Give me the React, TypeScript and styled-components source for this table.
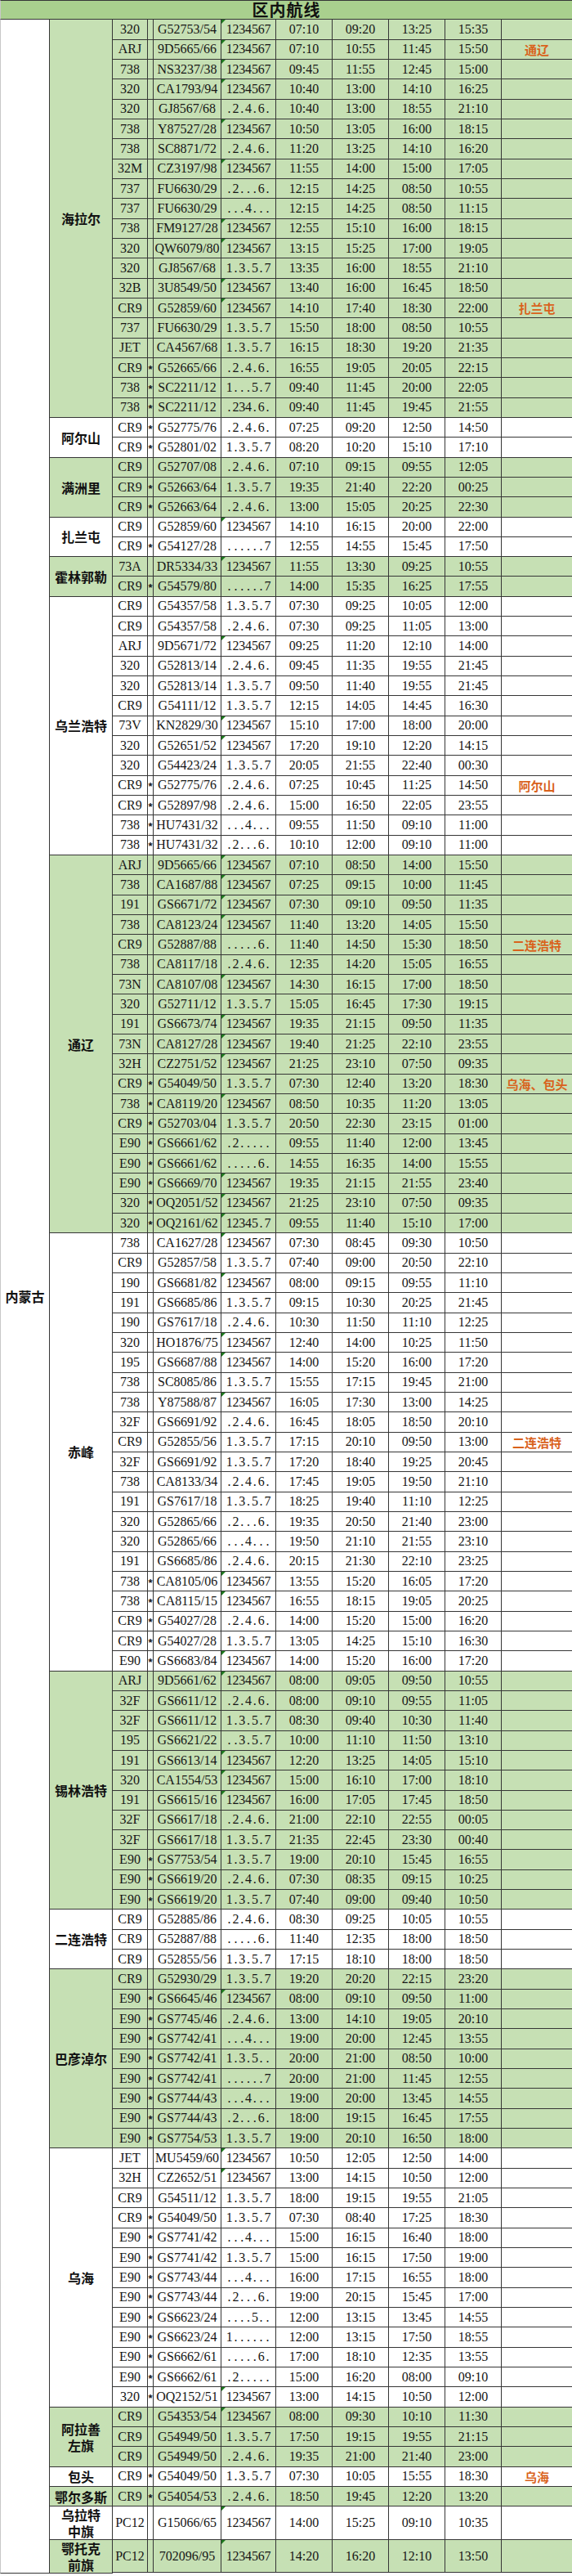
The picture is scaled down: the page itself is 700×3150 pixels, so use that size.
import React from 'react';
import styled, { createGlobalStyle } from 'styled-components';

const GREEN = '#c6e0b4';
const WHITE = '#ffffff';
const LINE = '#363636';

const GlobalStyle = createGlobalStyle`
  html, body {
    margin: 0;
    padding: 0;
    background: #fff;
  }
  body {
    font-family: "Liberation Serif", "Noto Sans CJK SC", serif;
    color: #161616;
  }
`;

interface Group {
  city: string;
  green: boolean;
  rowHeight?: number;
  rows: string[];
}

// type|star|flight|days|dep|arr|back dep|back arr|note
const groups: Group[] = [
  {
    city: '海拉尔',
    green: true,
    rows: [
      '320||G52753/54|1234567|07:10|09:20|13:25|15:35|',
      'ARJ||9D5665/66|1234567|07:10|10:55|11:45|15:50|通辽',
      '738||NS3237/38|1234567|09:45|11:55|12:45|15:00|',
      '320||CA1793/94|1234567|10:40|13:00|14:10|16:25|',
      '320||GJ8567/68|.2.4.6.|10:40|13:00|18:55|21:10|',
      '738||Y87527/28|1234567|10:50|13:05|16:00|18:15|',
      '738||SC8871/72|.2.4.6.|11:20|13:25|14:10|16:20|',
      '32M||CZ3197/98|1234567|11:55|14:00|15:00|17:05|',
      '737||FU6630/29|.2...6.|12:15|14:25|08:50|10:55|',
      '737||FU6630/29|...4...|12:15|14:25|08:50|11:15|',
      '738||FM9127/28|1234567|12:55|15:10|16:00|18:15|',
      '320||QW6079/80|1234567|13:15|15:25|17:00|19:05|',
      '320||GJ8567/68|1.3.5.7|13:35|16:00|18:55|21:10|',
      '32B||3U8549/50|1234567|13:40|16:00|16:45|18:50|',
      'CR9||G52859/60|1234567|14:10|17:40|18:30|22:00|扎兰屯',
      '737||FU6630/29|1.3.5.7|15:50|18:00|08:50|10:55|',
      'JET||CA4567/68|1.3.5.7|16:15|18:30|19:20|21:35|',
      'CR9|*|G52665/66|.2.4.6.|16:55|19:05|20:05|22:15|',
      '738|*|SC2211/12|1...5.7|09:40|11:45|20:00|22:05|',
      '738|*|SC2211/12|.234.6.|09:40|11:45|19:45|21:55|',
    ],
  },
  {
    city: '阿尔山',
    green: false,
    rows: [
      'CR9|*|G52775/76|.2.4.6.|07:25|09:20|12:50|14:50|',
      'CR9|*|G52801/02|1.3.5.7|08:20|10:20|15:10|17:10|',
    ],
  },
  {
    city: '满洲里',
    green: true,
    rows: [
      'CR9||G52707/08|.2.4.6.|07:10|09:15|09:55|12:05|',
      'CR9|*|G52663/64|1.3.5.7|19:35|21:40|22:20|00:25|',
      'CR9|*|G52663/64|.2.4.6.|13:00|15:05|20:25|22:30|',
    ],
  },
  {
    city: '扎兰屯',
    green: false,
    rows: [
      'CR9||G52859/60|1234567|14:10|16:15|20:00|22:00|',
      'CR9|*|G54127/28|......7|12:55|14:55|15:45|17:50|',
    ],
  },
  {
    city: '霍林郭勒',
    green: true,
    rows: [
      '73A||DR5334/33|1234567|11:55|13:30|09:25|10:55|',
      'CR9|*|G54579/80|......7|14:00|15:35|16:25|17:55|',
    ],
  },
  {
    city: '乌兰浩特',
    green: false,
    rows: [
      'CR9||G54357/58|1.3.5.7|07:30|09:25|10:05|12:00|',
      'CR9||G54357/58|.2.4.6.|07:30|09:25|11:05|13:00|',
      'ARJ||9D5671/72|1234567|09:25|11:20|12:10|14:00|',
      '320||G52813/14|.2.4.6.|09:45|11:35|19:55|21:45|',
      '320||G52813/14|1.3.5.7|09:50|11:40|19:55|21:45|',
      'CR9||G54111/12|1.3.5.7|12:15|14:05|14:45|16:30|',
      '73V||KN2829/30|1234567|15:10|17:00|18:00|20:00|',
      '320||G52651/52|1234567|17:20|19:10|12:20|14:15|',
      '320||G54423/24|1.3.5.7|20:05|21:55|22:40|00:30|',
      'CR9|*|G52775/76|.2.4.6.|07:25|10:45|11:25|14:50|阿尔山',
      'CR9|*|G52897/98|.2.4.6.|15:00|16:50|22:05|23:55|',
      '738|*|HU7431/32|...4...|09:55|11:50|09:10|11:00|',
      '738|*|HU7431/32|.2...6.|10:10|12:00|09:10|11:00|',
    ],
  },
  {
    city: '通辽',
    green: true,
    rows: [
      'ARJ||9D5665/66|1234567|07:10|08:50|14:00|15:50|',
      '738||CA1687/88|1234567|07:25|09:15|10:00|11:45|',
      '191||GS6671/72|1234567|07:30|09:10|09:50|11:35|',
      '738||CA8123/24|1234567|11:40|13:20|14:05|15:50|',
      'CR9||G52887/88|.....6.|11:40|14:50|15:30|18:50|二连浩特',
      '738||CA8117/18|.2.4.6.|12:35|14:20|15:05|16:55|',
      '73N||CA8107/08|1234567|14:30|16:15|17:00|18:50|',
      '320||G52711/12|1.3.5.7|15:05|16:45|17:30|19:15|',
      '191||GS6673/74|1234567|19:35|21:15|09:50|11:35|',
      '73N||CA8127/28|1234567|19:40|21:25|22:10|23:55|',
      '32H||CZ2751/52|1234567|21:25|23:10|07:50|09:35|',
      'CR9|*|G54049/50|1.3.5.7|07:30|12:40|13:20|18:30|乌海、包头',
      '738|*|CA8119/20|1234567|08:50|10:35|11:20|13:05|',
      'CR9|*|G52703/04|1.3.5.7|20:50|22:30|23:15|01:00|',
      'E90|*|GS6661/62|.2.....|09:55|11:40|12:00|13:45|',
      'E90|*|GS6661/62|.....6.|14:55|16:35|14:00|15:55|',
      'E90|*|GS6669/70|1234567|19:35|21:15|21:55|23:40|',
      '320|*|OQ2051/52|1234567|21:25|23:10|07:50|09:35|',
      '320|*|OQ2161/62|12345.7|09:55|11:40|15:10|17:00|',
    ],
  },
  {
    city: '赤峰',
    green: false,
    rows: [
      '738||CA1627/28|1234567|07:30|08:45|09:30|10:50|',
      'CR9||G52857/58|1.3.5.7|07:40|09:00|20:50|22:10|',
      '190||GS6681/82|1234567|08:00|09:15|09:55|11:10|',
      '191||GS6685/86|1.3.5.7|09:15|10:30|20:25|21:45|',
      '190||GS7617/18|.2.4.6.|10:30|11:50|11:10|12:25|',
      '320||HO1876/75|1234567|12:40|14:00|10:25|11:50|',
      '195||GS6687/88|1234567|14:00|15:20|16:00|17:20|',
      '738||SC8085/86|1.3.5.7|15:55|17:15|19:45|21:00|',
      '738||Y87588/87|1234567|16:05|17:30|13:00|14:25|',
      '32F||GS6691/92|.2.4.6.|16:45|18:05|18:50|20:10|',
      'CR9||G52855/56|1.3.5.7|17:15|20:10|09:50|13:00|二连浩特',
      '32F||GS6691/92|1.3.5.7|17:20|18:40|19:25|20:45|',
      '738||CA8133/34|.2.4.6.|17:45|19:05|19:50|21:10|',
      '191||GS7617/18|1.3.5.7|18:25|19:40|11:10|12:25|',
      '320||G52865/66|.2...6.|19:35|20:50|21:40|23:00|',
      '320||G52865/66|...4...|19:50|21:10|21:55|23:10|',
      '191||GS6685/86|.2.4.6.|20:15|21:30|22:10|23:25|',
      '738|*|CA8105/06|1234567|13:55|15:20|16:05|17:20|',
      '738|*|CA8115/15|1234567|16:55|18:15|19:05|20:25|',
      'CR9|*|G54027/28|.2.4.6.|14:00|15:20|15:00|16:20|',
      'CR9|*|G54027/28|1.3.5.7|13:05|14:25|15:10|16:30|',
      'E90|*|GS6683/84|1234567|14:00|15:20|16:00|17:20|',
    ],
  },
  {
    city: '锡林浩特',
    green: true,
    rows: [
      'ARJ||9D5661/62|1234567|08:00|09:05|09:50|10:55|',
      '32F||GS6611/12|.2.4.6.|08:00|09:10|09:55|11:05|',
      '32F||GS6611/12|1.3.5.7|08:30|09:40|10:30|11:40|',
      '195||GS6621/22|..3.5.7|10:00|11:10|11:50|13:10|',
      '191||GS6613/14|1234567|12:20|13:25|14:05|15:10|',
      '320||CA1554/53|1234567|15:00|16:10|17:00|18:10|',
      '191||GS6615/16|1234567|16:00|17:05|17:45|18:50|',
      '32F||GS6617/18|.2.4.6.|21:00|22:10|22:55|00:05|',
      '32F||GS6617/18|1.3.5.7|21:35|22:45|23:30|00:40|',
      'E90|*|GS7753/54|1.3.5.7|19:00|20:10|15:45|16:55|',
      'E90|*|GS6619/20|.2.4.6.|07:30|08:35|09:15|10:25|',
      'E90|*|GS6619/20|1.3.5.7|07:40|09:00|09:40|10:50|',
    ],
  },
  {
    city: '二连浩特',
    green: false,
    rows: [
      'CR9||G52885/86|.2.4.6.|08:30|09:25|10:05|10:55|',
      'CR9||G52887/88|.....6.|11:40|12:35|18:00|18:50|',
      'CR9||G52855/56|1.3.5.7|17:15|18:10|18:00|18:50|',
    ],
  },
  {
    city: '巴彦淖尔',
    green: true,
    rows: [
      'CR9||G52930/29|1.3.5.7|19:20|20:20|22:15|23:20|',
      'E90|*|GS6645/46|1234567|08:00|09:10|09:50|11:00|',
      'E90|*|GS7745/46|.2.4.6.|13:00|14:10|19:05|20:10|',
      'E90|*|GS7742/41|...4...|19:00|20:00|12:45|13:55|',
      'E90|*|GS7742/41|1.3.5..|20:00|21:00|08:50|10:00|',
      'E90|*|GS7742/41|......7|20:00|21:00|11:45|12:55|',
      'E90|*|GS7744/43|...4...|19:00|20:00|13:45|14:55|',
      'E90|*|GS7744/43|.2...6.|18:00|19:15|16:45|17:55|',
      'E90|*|GS7754/53|1.3.5.7|19:00|20:10|16:50|18:00|',
    ],
  },
  {
    city: '乌海',
    green: false,
    rows: [
      'JET||MU5459/60|1234567|10:50|12:05|12:50|14:00|',
      '32H||CZ2652/51|1234567|13:00|14:15|10:50|12:00|',
      'CR9||G54511/12|1.3.5.7|18:00|19:15|19:55|21:05|',
      'CR9|*|G54049/50|1.3.5.7|07:30|08:40|17:25|18:30|',
      'E90|*|GS7741/42|...4...|15:00|16:15|16:40|18:00|',
      'E90|*|GS7741/42|1.3.5.7|15:00|16:15|17:50|19:00|',
      'E90|*|GS7743/44|...4...|16:00|17:15|16:55|18:00|',
      'E90|*|GS7743/44|.2...6.|19:00|20:15|15:45|17:00|',
      'E90|*|GS6623/24|....5..|12:00|13:15|13:45|14:55|',
      'E90|*|GS6623/24|1......|12:00|13:15|17:50|18:55|',
      'E90|*|GS6662/61|.....6.|17:00|18:10|12:35|13:55|',
      'E90|*|GS6662/61|.2.....|15:00|16:20|08:00|09:10|',
      '320|*|OQ2152/51|1234567|13:00|14:15|10:50|12:00|',
    ],
  },
  {
    city: '阿拉善\n左旗',
    green: true,
    rows: [
      'CR9||G54353/54|1234567|08:00|09:30|10:10|11:30|',
      'CR9||G54949/50|1.3.5.7|17:50|19:15|19:55|21:15|',
      'CR9||G54949/50|.2.4.6.|19:35|21:00|21:40|23:00|',
    ],
  },
  {
    city: '包头',
    green: false,
    rows: ['CR9|*|G54049/50|1.3.5.7|07:30|10:05|15:55|18:30|乌海'],
  },
  {
    city: '鄂尔多斯',
    green: true,
    rows: ['CR9|*|G54054/53|.2.4.6.|18:50|19:45|12:20|13:20|'],
  },
  {
    city: '乌拉特\n中旗',
    green: false,
    rowHeight: 41,
    rows: ['PC12||G15066/65|1234567|14:00|15:25|09:10|10:35|'],
  },
  {
    city: '鄂托克\n前旗',
    green: true,
    rowHeight: 40,
    rows: ['PC12||702096/95|1234567|14:20|16:20|12:10|13:50|'],
  },
];

const ROW_H = 24.34;

const Sheet = styled.div`
  display: grid;
  grid-template-columns: 61px 77px 43px 7px 83px 67px 69px 69px 69px 69px 86px;
  width: 700px;
`;

const Title = styled.div`
  grid-column: 1 / -1;
  height: 24.3px;
  box-sizing: border-box;
  background: #a9d08e;
  border-top: 1px solid ${LINE};
  border-bottom: 1px solid ${LINE};
  border-left: 1px solid #c8c8c8;
  display: flex;
  align-items: center;
  justify-content: center;
  font-family: "Noto Sans CJK SC", sans-serif;
  font-weight: 700;
  font-size: 20px;
  line-height: 1;
  letter-spacing: 1px;
  color: #111;
`;

const Province = styled.div<{ $span: number }>`
  grid-column: 1;
  grid-row: span ${p => p.$span};
  box-sizing: border-box;
  border-left: 1px solid #c8c8c8;
  border-right: 1px solid ${LINE};
  border-bottom: 1px solid ${LINE};
  background: ${WHITE};
  display: flex;
  align-items: center;
  justify-content: center;
  font-family: "Noto Sans CJK SC", sans-serif;
  font-weight: 700;
  font-size: 16px;
  color: #111;
`;

const City = styled.div<{ $span: number; $bg: string }>`
  grid-column: 2;
  grid-row: span ${p => p.$span};
  box-sizing: border-box;
  border-right: 1px solid ${LINE};
  border-bottom: 1px solid ${LINE};
  background: ${p => p.$bg};
  display: flex;
  align-items: center;
  justify-content: center;
  text-align: center;
  white-space: pre-line;
  line-height: 20px;
  font-family: "Noto Sans CJK SC", sans-serif;
  font-weight: 700;
  font-size: 16px;
  color: #111;
`;

const Cell = styled.div<{ $bg: string; $h: number }>`
  position: relative;
  height: ${p => p.$h}px;
  box-sizing: border-box;
  background: ${p => p.$bg};
  border-right: 1px solid ${LINE};
  border-bottom: 1px solid ${LINE};
  display: flex;
  align-items: center;
  justify-content: center;
  white-space: nowrap;
  font-size: 16px;
`;

const StarCell = styled(Cell)`
  font-family: "Liberation Sans", sans-serif;
  font-weight: 700;
  font-size: 13px;
  overflow: visible;
  padding-top: 3px;
`;

const DaysCell = styled(Cell)<{ $flag: boolean }>`
  &::before {
    content: '';
    display: ${p => (p.$flag ? 'block' : 'none')};
    position: absolute;
    left: 0;
    top: 0;
    border-top: 5px solid #1e7a1e;
    border-right: 5px solid transparent;
  }
`;

const DaySlot = styled.span`
  display: inline-block;
  width: 7.8px;
  text-align: center;
`;

const NoteCell = styled(Cell)`
  border-right: none;
  font-family: "Noto Sans CJK SC", sans-serif;
  font-weight: 700;
  font-size: 15px;
  color: #d9621c;
`;

const Days: React.FC<{ value: string }> = ({ value }) => (
  <>
    {value.split('').map((c, i) => (
      <DaySlot key={i}>{c}</DaySlot>
    ))}
  </>
);

const totalRows = groups.reduce((n, g) => n + g.rows.length, 0);

const App: React.FC = () => {
  return (
    <>
      <GlobalStyle />
      <Sheet>
        <Title>区内航线</Title>
        <Province $span={totalRows}>内蒙古</Province>
        {groups.map(g => {
          const bg = g.green ? GREEN : WHITE;
          const h = g.rowHeight || ROW_H;
          return (
            <React.Fragment key={g.city}>
              <City $span={g.rows.length} $bg={bg}>
                {g.city}
              </City>
              {g.rows.map((line, i) => {
                const [type, star, flight, days, t1, t2, t3, t4, note] = line.split('|');
                return (
                  <React.Fragment key={i}>
                    <Cell $bg={bg} $h={h}>{type}</Cell>
                    <StarCell $bg={bg} $h={h}>{star}</StarCell>
                    <Cell $bg={bg} $h={h}>{flight}</Cell>
                    <DaysCell $bg={bg} $h={h} $flag={days === '1234567' || days === '12345.7'}>
                      <Days value={days} />
                    </DaysCell>
                    <Cell $bg={bg} $h={h}>{t1}</Cell>
                    <Cell $bg={bg} $h={h}>{t2}</Cell>
                    <Cell $bg={bg} $h={h}>{t3}</Cell>
                    <Cell $bg={bg} $h={h}>{t4}</Cell>
                    <NoteCell $bg={bg} $h={h}>{note}</NoteCell>
                  </React.Fragment>
                );
              })}
            </React.Fragment>
          );
        })}
      </Sheet>
    </>
  );
};

export default App;
